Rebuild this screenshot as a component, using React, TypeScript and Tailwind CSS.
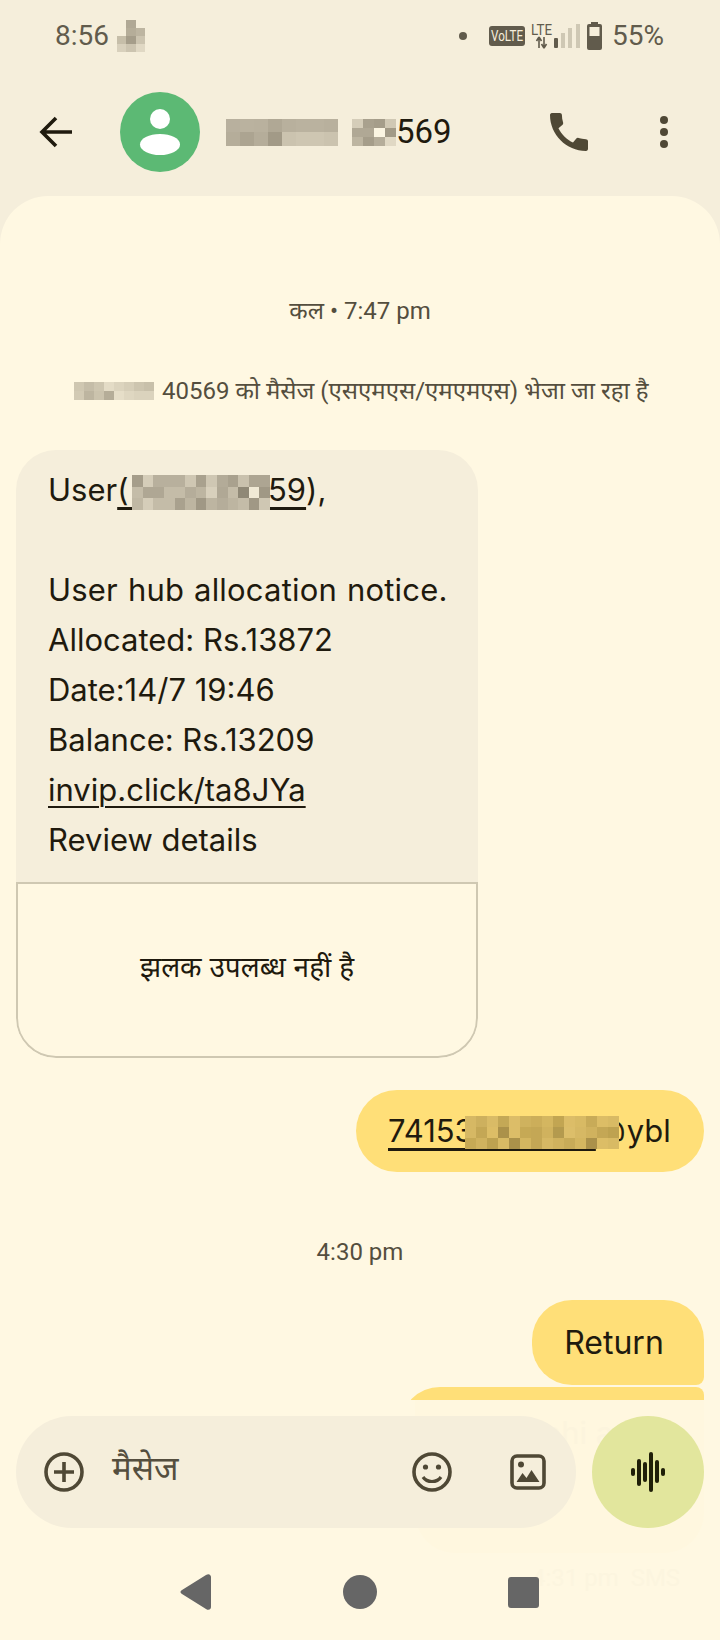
import React from 'react';

const FONT = 'Inter, "Noto Sans", sans-serif';
const SYSTEM = 'Roboto, "Noto Sans", sans-serif';

// mosaic used where the screenshot hides a phone number
const Mosaic: React.FC<{ w: number; h: number; rows: string[][]; className?: string }> = ({ w, h, rows, className }) => (
  <span className={`inline-flex flex-col align-middle ${className ?? ''}`}>
    {rows.map((row, r) => (
      <span key={r} className="flex">
        {row.map((c, i) => (
          <span key={i} style={{ width: w, height: h, background: c }} />
        ))}
      </span>
    ))}
  </span>
);

const userMosaic = [
  ['#a59d8a', '#d5cdb9', '#b8b09d', '#b8b09d', '#b8b09d', '#cfc7b3', '#a9a18e', '#cfc7b3', '#b3ab98', '#a9a18e', '#c9c1ad', '#ada592', '#ada592'],
  ['#c4bca8', '#afa794', '#afa794', '#c4bca8', '#c4bca8', '#b5ad9a', '#bdb5a1', '#d8d0bc', '#b0a895', '#c4bca8', '#8f8876', '#f0e9d5', '#a09885'],
  ['#c0b8a4', '#d5cdb9', '#c4bca8', '#c4bca8', '#a9a18e', '#bdb5a1', '#a09885', '#bdb5a1', '#b5ad9a', '#bdb5a1', '#c4bca8', '#a09885', '#cfc7b3'],
];

const sentMosaic = [
  ['#d6b864', '#cdb05e', '#d9bb66', '#c4a856', '#dcbd68', '#cfb25e', '#ccae5a', '#d4b660', '#c2a552', '#dcbd68', '#d8ba64', '#c8ab58', '#dcbd66', '#d8ba64'],
  ['#d6b864', '#c4a755', '#dcbd66', '#ab914a', '#dcbd68', '#c6a955', '#c4a755', '#d0b25e', '#b49a4e', '#dcbe6a', '#d6b864', '#d0b25e', '#c4a755', '#bea250'],
  ['#c6a955', '#d0b25e', '#bea250', '#d8ba64', '#ab914a', '#d4b660', '#c4a755', '#d6b864', '#d0b25e', '#c8ab58', '#d4b660', '#ab914a', '#dcbd66', '#d8ba64'],
];

const MessageLine: React.FC<{ children: React.ReactNode; className?: string }> = ({ children, className }) => (
  <div className={`h-[50px] leading-[50px] text-[31px] text-[#1f1a0e] whitespace-nowrap ${className ?? ''}`}>{children}</div>
);

const App: React.FC = () => {
  return (
    <div className="relative w-[720px] h-[1640px] overflow-hidden bg-[#f5eedb]" style={{ fontFamily: FONT }}>
      {/* status bar */}
      <div className="h-[72px] pl-[55px] pr-[56px] flex items-center text-[#615b4c] text-[28px]" style={{ fontFamily: SYSTEM }}>
        <span>8:56</span>
        <Mosaic
          w={9.3}
          h={8}
          className="ml-[8px]"
          rows={[
            ['#f5eedb', '#b0a895', '#f5eedb'],
            ['#f5eedb', '#b5ad99', '#bdb5a1'],
            ['#c6bea9', '#a59d8a', '#ccc4b0'],
            ['#d8d0bc', '#ccc4b0', '#e0d8c4'],
          ]}
        />
        <span className="ml-auto w-[8px] h-[8px] rounded-full bg-[#615b4c] mr-[22px]" />
        <svg width="36" height="20" viewBox="0 0 36 20" className="mr-[6px]">
          <rect width="36" height="20" rx="3" fill="#615b4c" />
          <text x="18" y="15" textAnchor="middle" fontSize="14" fill="#f5eedb" fontFamily="Roboto, sans-serif" textLength="32" lengthAdjust="spacingAndGlyphs">VoLTE</text>
        </svg>
        <svg width="71" height="28" viewBox="0 0 71 28" className="mr-[10px]">
          <text x="0" y="13" fontSize="14" fill="#615b4c" fontFamily="Roboto, sans-serif" textLength="21" lengthAdjust="spacingAndGlyphs">LTE</text>
          <path d="M8 26V15M8 15l-2.5 4M8 15l2.5 4M13 15v11M13 26l-2.5-4M13 26l2.5-4" stroke="#615b4c" strokeWidth="1.6" fill="none" />
          <rect x="23" y="16" width="4" height="10" rx="1" fill="#615b4c" />
          <rect x="30" y="11" width="4" height="15" fill="#cfc8b4" />
          <rect x="37" y="6" width="4" height="20" fill="#cfc8b4" />
          <rect x="45" y="2" width="4" height="24" fill="#cfc8b4" />
          <path d="M60 0h7v2h2a2 2 0 0 1 2 2v22a2 2 0 0 1-2 2H58a2 2 0 0 1-2-2V4a2 2 0 0 1 2-2h2z" fill="#615b4c" />
          <rect x="58.5" y="5" width="10" height="9" fill="#f5eedb" />
        </svg>
        <span>55%</span>
      </div>

      {/* app bar */}
      <div className="h-[120px] mb-[4px] flex items-center">
        <svg width="34" height="32" viewBox="0 0 34 32" className="ml-[39px]" fill="none" stroke="#1f1a0e" strokeWidth="3.6">
          <path d="M33 16H3M17 2L3 16l14 14" />
        </svg>
        <div className="ml-[47px] w-[80px] h-[80px] rounded-full bg-[#5cb974] flex flex-col items-center justify-center">
          <span className="w-[20px] h-[20px] rounded-full bg-white" />
          <span className="mt-[5px] w-[40px] h-[21px] rounded-[50%] bg-white" />
        </div>
        <div className="ml-[26px] flex items-center text-[33px] text-[#1f1a0e]" style={{ fontFamily: SYSTEM }}>
          <Mosaic
            w={14}
            h={13.5}
            rows={[
              ['#b8b09e', '#bab29f', '#b9b19e', '#b0a895', '#b8b09d', '#bab29f', '#bab29f', '#b8b09d'],
              ['#b5ad9a', '#aca491', '#b5ad9a', '#a29a87', '#cbc3af', '#cec6b2', '#cec6b2', '#cbc3af'],
            ]}
          />
          <span className="w-[14px]" />
          <Mosaic
            w={11}
            h={9}
            rows={[
              ['#d5cdb9', '#a9a18e', '#a59d8a', '#d0c8b4'],
              ['#b0a895', '#b0a895', '#fbf5e2', '#a29a87'],
              ['#bdb5a1', '#a59d8a', '#b5ad9a', '#e0d8c4'],
            ]}
          />
          <span>569</span>
        </div>
        <svg width="38" height="38" viewBox="3 3 18 18" className="ml-auto mr-[72px]" fill="#4f4835">
          <path d="M20.01 15.38c-1.23 0-2.42-.2-3.53-.56-.35-.12-.74-.03-1.01.24l-1.57 1.97c-2.83-1.35-5.48-3.9-6.89-6.83l1.95-1.66c.27-.28.35-.67.24-1.02-.37-1.11-.56-2.3-.56-3.53 0-.54-.45-.99-.99-.99H4.19C3.65 3 3 3.24 3 3.99 3 13.28 10.73 21 20.01 21c.71 0 .99-.63.99-1.18v-3.45c0-.54-.45-.99-.99-.99z" />
        </svg>
        <div className="mr-[52px] flex flex-col gap-[4px]">
          <span className="w-[8px] h-[8px] rounded-full bg-[#4f4835]" />
          <span className="w-[8px] h-[8px] rounded-full bg-[#4f4835]" />
          <span className="w-[8px] h-[8px] rounded-full bg-[#4f4835]" />
        </div>
      </div>

      {/* conversation */}
      <div className="h-[1444px] rounded-t-[48px] bg-[#fff8e2] overflow-hidden pt-[100px]">
        <div className="text-center text-[24px] leading-[30px] text-[#544e3e]" style={{ fontFamily: SYSTEM }}>कल • 7:47 pm</div>
        <div className="mt-[50px] pl-[74px] flex items-center text-[24px] leading-[30px] text-[#544e3e]" style={{ fontFamily: SYSTEM }}>
          <Mosaic
            w={10}
            h={9}
            className="mr-[8px]"
            rows={[
              ['#cfc7b1', '#c5bda8', '#cec6b0', '#e4dcc6', '#dcd4be', '#d6ceb8', '#cdc5af', '#c8c0aa'],
              ['#d2cab4', '#bdb5a0', '#cbc3ad', '#b5ad98', '#e6dec8', '#dfd7c1', '#dbd3bd', '#dbd3bd'],
            ]}
          />
          <span className="whitespace-nowrap">40569 को मैसेज (एसएमएस/एमएमएस) भेजा जा रहा है</span>
        </div>

        {/* received message with preview card */}
        <div className="mt-[44px] ml-[16px] w-[462px] h-[608px] rounded-[40px] overflow-hidden bg-[#f5eedb] flex flex-col">
          <div className="h-[432px] pl-[32px] pt-[15px]">
            <MessageLine>
              User
              <span className="relative underline decoration-[3px] underline-offset-[6px]">
                (&nbsp;&nbsp;&nbsp;&nbsp;&nbsp;&nbsp;&nbsp;&nbsp;&nbsp;&nbsp;&nbsp;&nbsp;&nbsp;&nbsp;&nbsp;&nbsp;59
                <Mosaic w={10.6} h={11.6} rows={userMosaic} className="absolute left-[15px] top-[4px]" />
              </span>
              ),
            </MessageLine>
            <MessageLine>&nbsp;</MessageLine>
            <MessageLine className="tracking-[0.2px] [word-spacing:1px]">User hub allocation notice.</MessageLine>
            <MessageLine>Allocated: Rs.13872</MessageLine>
            <MessageLine>Date:14/7 19:46</MessageLine>
            <MessageLine>Balance: Rs.13209</MessageLine>
            <MessageLine>
              <span className="underline decoration-2 underline-offset-[5px]">invip.click/ta8JYa</span>
            </MessageLine>
            <MessageLine>Review details</MessageLine>
          </div>
          <div className="flex-1 bg-[#fff8e2] border-2 border-[#cfc8b2] rounded-b-[40px] flex items-center justify-center text-[28px] text-[#1f1a0e] pb-[6px]">
            झलक उपलब्ध नहीं है
          </div>
        </div>

        {/* sent */}
        <div className="mt-[32px] mr-[16px] flex justify-end">
          <div className="relative h-[82px] w-[348px] rounded-[41px] bg-[#ffdf78] pl-[32px] flex items-center text-[31px] text-[#1f1a0e] whitespace-nowrap">
            <span className="underline decoration-[3px] underline-offset-[6px]">74153&nbsp;&nbsp;&nbsp;&nbsp;&nbsp;&nbsp;&nbsp;&nbsp;&nbsp;&nbsp;&nbsp;&nbsp;&nbsp;&nbsp;</span>
            <span className="tracking-[-6px]">@</span>
            <span className="ml-[7px]">ybl</span>
            <Mosaic w={11} h={11} rows={sentMosaic} className="absolute left-[109px] top-[26px]" />
          </div>
        </div>

        <div className="mt-[65px] text-center text-[24px] leading-[30px] text-[#544e3e]" style={{ fontFamily: SYSTEM }}>4:30 pm</div>

        <div className="mt-[33px] mr-[16px] flex justify-end">
          <div className="h-[85px] w-[172px] pr-[8px] justify-center rounded-t-[40px] rounded-bl-[40px] rounded-br-[8px] bg-[#ffdf78] flex items-center text-[32px] text-[#1f1a0e]">Return</div>
        </div>
        <div className="mt-[2px] mr-[16px] ml-[400px] h-[100px] rounded-t-[40px] rounded-tr-[8px] bg-[#ffdf78]" />
      </div>

      <div className="absolute left-0 right-0 top-[1400px] bottom-0 bg-[#fff8e2]">
        <div className="absolute left-[415px] right-[16px] top-0 h-[153px] rounded-b-[40px] bg-[#fff7df]" />
        <span className="absolute left-[425px] top-[10px] text-[31px] text-[#fcf4dd] whitespace-nowrap">Bahan nahi aa</span>
        <span className="absolute left-[532px] top-[160px] text-[24px] text-[#fcf5df] whitespace-pre" style={{ fontFamily: SYSTEM }}>4:31 pm  SMS</span>

        <div className="relative mt-[16px] mx-[16px] flex gap-[16px]">
          <div className="w-[560px] h-[112px] rounded-[56px] bg-[#f5eedb] flex items-center">
            <svg width="40" height="40" viewBox="0 0 40 40" className="ml-[28px]" fill="none" stroke="#4f4835" strokeWidth="3.6">
              <circle cx="20" cy="20" r="18" />
              <path d="M20 10v20M10 20h20" />
            </svg>
            <span className="ml-[28px] text-[33px] text-[#544e3e] pb-[6px]" style={{ fontFamily: SYSTEM }}>मैसेज</span>
            <svg width="40" height="40" viewBox="0 0 40 40" className="ml-auto" fill="none" stroke="#4f4835" strokeWidth="3.6">
              <circle cx="20" cy="20" r="18" />
              <circle cx="13.5" cy="15" r="2.6" fill="#4f4835" stroke="none" />
              <circle cx="26.5" cy="15" r="2.6" fill="#4f4835" stroke="none" />
              <path d="M11 25c4 6 14 6 18 0" strokeWidth="3.2" />
            </svg>
            <svg width="36" height="36" viewBox="0 0 36 36" className="ml-[58px] mr-[30px]" fill="none" stroke="#4f4835" strokeWidth="3.6">
              <rect x="2" y="2" width="32" height="32" rx="5" />
              <circle cx="11" cy="10.5" r="3" fill="#4f4835" stroke="none" />
              <path d="M6.5 28l6-9 4 5 5-8 8 12z" fill="#4f4835" stroke="none" />
            </svg>
          </div>
          <div className="w-[112px] h-[112px] rounded-full bg-[#e2e69d] flex items-center justify-center">
            <svg width="34" height="40" viewBox="0 0 34 40" fill="#1f1f08">
              <rect x="0" y="16" width="4" height="8" rx="2" />
              <rect x="6" y="7" width="4" height="27" rx="2" />
              <rect x="12" y="10" width="4" height="20" rx="2" />
              <rect x="18" y="0" width="4" height="40" rx="2" />
              <rect x="24" y="8" width="4" height="23" rx="2" />
              <rect x="30" y="16" width="4" height="8" rx="2" />
            </svg>
          </div>
        </div>

        {/* nav bar */}
        <div className="relative mt-[46px] h-[36px] flex items-center justify-center">
          <svg width="32" height="36" viewBox="0 0 32 36" className="absolute left-[180px]" fill="#666666">
            <path d="M26 1c3-2 5 0 5 2v30c0 2-2 4-5 2L2 20c-2-1-2-3 0-4z" />
          </svg>
          <span className="w-[34px] h-[34px] rounded-full bg-[#666666]" />
          <span className="absolute left-[508px] w-[31px] h-[31px] rounded-[3px] bg-[#666666]" />
        </div>
      </div>
    </div>
  );
};

export default App;
